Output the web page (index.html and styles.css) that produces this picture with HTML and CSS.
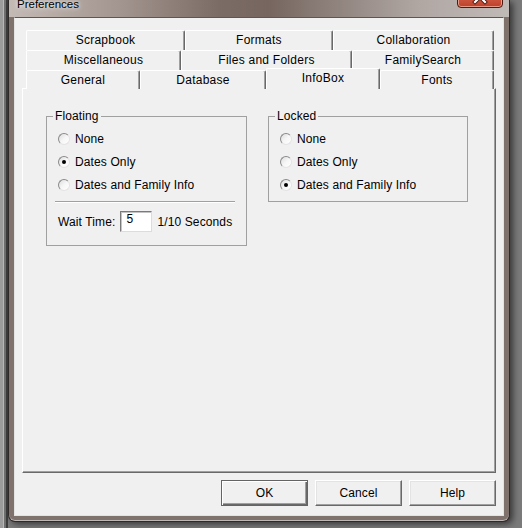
FILE: index.html
```html
<!DOCTYPE html>
<html>
<head>
<meta charset="utf-8">
<title>Preferences</title>
<link rel="stylesheet" href="styles.css">
</head>
<body>
<div class="window">
  <div class="titlebar">
    <span class="title">Preferences</span>
    <span class="close">
      <svg width="46" height="20" viewBox="0 0 46 20">
        <path d="M18 4 L28 14 M28 4 L18 14" stroke="#4a1a10" stroke-width="4" stroke-linecap="square"/>
        <path d="M18 4 L28 14 M28 4 L18 14" stroke="#ffffff" stroke-width="2.2" stroke-linecap="square"/>
      </svg>
    </span>
  </div>
  <div class="client">
    <div class="tabctl">
      <div class="tabrow row1">
        <div class="tab">Scrapbook</div>
        <div class="tab">Formats</div>
        <div class="tab">Collaboration</div>
      </div>
      <div class="tabrow row2">
        <div class="tab">Miscellaneous</div>
        <div class="tab">Files and Folders</div>
        <div class="tab">FamilySearch</div>
      </div>
      <div class="tabrow row3">
        <div class="tab">General</div>
        <div class="tab">Database</div>
        <div class="tab selected">InfoBox</div>
        <div class="tab">Fonts</div>
      </div>
      <div class="panel">
        <fieldset class="group floating">
          <legend>Floating</legend>
          <div class="opt"><span class="radio"></span>None</div>
          <div class="opt"><span class="radio checked"></span>Dates Only</div>
          <div class="opt"><span class="radio"></span>Dates and Family Info</div>
          <div class="sep"></div>
          <div class="wait">
            <span>Wait Time:</span>
            <span class="input">5</span>
            <span>1/10 Seconds</span>
          </div>
        </fieldset>
        <fieldset class="group locked">
          <legend>Locked</legend>
          <div class="opt"><span class="radio"></span>None</div>
          <div class="opt"><span class="radio"></span>Dates Only</div>
          <div class="opt"><span class="radio checked"></span>Dates and Family Info</div>
        </fieldset>
      </div>
    </div>
    <div class="buttons">
      <div class="btn default">OK</div>
      <div class="btn">Cancel</div>
      <div class="btn">Help</div>
    </div>
  </div>
</div>
</body>
</html>
```

FILE: styles.css
```css
* { box-sizing: border-box; }
html, body { margin: 0; padding: 0; }
body {
  width: 522px;
  height: 528px;
  overflow: hidden;
  background: linear-gradient(90deg, #9c9c9c 0 3px, #b8b8b8 3px 4px, #707070 4px 6px, #3e3e3e 6px 8px, #7a7a7a 8px 100%);
  font-family: "Liberation Sans", Arial, sans-serif;
  font-size: 12px;
  letter-spacing: 0.12px;
  color: #000;
}

.window {
  margin-left: 8px;
  width: 502px;
  height: 522px;
  display: flex;
  flex-direction: column;
  padding: 0 5px 5px 5px;
  border: 1px solid #2f2a29;
  border-top: none;
  border-radius: 0 0 7px 7px;
  background-color: #7f716c;
  background-image: linear-gradient(90deg, #c4bab5 0%, #a3958f 22%, #7c6c66 42%, #76665f 52%, #8d807b 64%, #b0a7a3 82%, #c0bab7 100%);
  background-size: 100% 17px;
  background-repeat: no-repeat;
  box-shadow: inset 0 -1px 0 rgba(230, 230, 230, 0.6), 3px 2px 6px rgba(0, 0, 0, 0.55);
}

.titlebar {
  height: 17px;
  margin: 0 -5px;
  padding-left: 8px;
  display: flex;
  align-items: flex-start;
}
.title {
  margin-top: -3px;
  line-height: 14px;
  font-size: 11.5px;
  letter-spacing: 0;
  color: #000;
  text-shadow: 0 0 6px rgba(255, 255, 255, 0.9), 0 0 3px rgba(255, 255, 255, 0.7);
}
.close {
  margin-left: auto;
  margin-right: 6px;
  margin-top: -12px;
  width: 46px;
  height: 20px;
  border-radius: 0 0 4px 4px;
  border: 1px solid #4a1c14;
  background: linear-gradient(180deg, #e08870 0%, #cc5640 55%, #be4028 100%);
  box-shadow: inset 0 0 0 1px rgba(255, 210, 200, 0.6);
  overflow: hidden;
}
.close svg { display: block; margin: -1px; }

.client {
  flex: 1;
  background: #f0f0f0;
  border: 1px solid #e3e3e3;
  border-top-color: #5f5552;
  padding: 12px 0 0 7px;
}

.tabctl { width: 474px; }

.tabrow {
  display: grid;
  height: 20px;
  margin-left: 4px;
  width: 468px;
}
.row1 { grid-template-columns: 159px 148px 161px; }
.row2 { grid-template-columns: 155px 171px 142px; }
.row3 { grid-template-columns: 114px 126px 114px 114px; height: 18px; }

.tab {
  background: #f0f0f0;
  border-top: 1px solid #fff;
  border-left: 1px solid #fff;
  border-right: 1px solid #696969;
  box-shadow: inset -1px 0 0 #a0a0a0;
  border-radius: 2px 2px 0 0;
  text-align: center;
  padding-top: 2px;
  line-height: 14px;
  letter-spacing: 0.25px;
  white-space: nowrap;
}
.tab.selected {
  align-self: start;
  height: 21px;
  margin-top: -2px;
  position: relative;
  z-index: 1;
}

.panel {
  height: 385px;
  border: 1px solid;
  border-color: #fff #696969 #696969 #fff;
  box-shadow: inset -1px -1px 0 #a0a0a0;
  padding: 20px 0 0 23px;
  display: flex;
  align-items: flex-start;
  gap: 21px;
}

.group {
  margin: 0;
  min-width: 0;
  border: 1px solid #a0a0a0;
  padding: 4px 0 13px 11px;
}
.group legend {
  padding: 0 2px;
  margin-left: -5px;
  line-height: 14px;
}
.floating { width: 201px; }
.locked { width: 200px; padding-bottom: 5px; }

.opt {
  height: 23px;
  display: flex;
  align-items: center;
  gap: 5px;
  white-space: nowrap;
}
.radio {
  flex: none;
  width: 12px;
  height: 12px;
  border-radius: 50%;
  border: 1px solid;
  border-color: #8a8a8a #e4e4e4 #e4e4e4 #8a8a8a;
  background: linear-gradient(135deg, #dcdcdc 0%, #f6f6f6 50%, #ffffff 100%);
  display: grid;
  place-items: center;
}
.radio.checked::after {
  content: "";
  width: 4px;
  height: 4px;
  border-radius: 50%;
  background: #000;
}

.sep {
  margin: 5px 11px 0 -3px;
  height: 2px;
  border-top: 1px solid #a0a0a0;
  border-bottom: 1px solid #fff;
}

.wait {
  margin-top: 8px;
  display: flex;
  align-items: center;
  gap: 5px;
  white-space: nowrap;
}
.input {
  width: 32px;
  height: 21px;
  background: #fff;
  border: 1px solid;
  border-color: #7a7a7a #dcdcdc #dcdcdc #7a7a7a;
  box-shadow: inset 1px 1px 0 #c4c4c4;
  padding: 0 5px;
  line-height: 14px;
}

.buttons {
  width: 474px;
  margin-top: 7px;
  display: flex;
  justify-content: flex-end;
  gap: 7px;
}
.btn {
  width: 87px;
  height: 26px;
  display: flex;
  align-items: center;
  justify-content: center;
  background: #f0f0f0;
  border: 1px solid;
  border-color: #fff #696969 #696969 #fff;
  box-shadow: inset -1px -1px 0 #a0a0a0, inset 1px 1px 0 #e3e3e3;
}
.btn.default {
  border-color: #646464;
  box-shadow: inset 1px 1px 0 #fff, inset -1px -1px 0 #696969, inset -2px -2px 0 #a0a0a0;
}
```
